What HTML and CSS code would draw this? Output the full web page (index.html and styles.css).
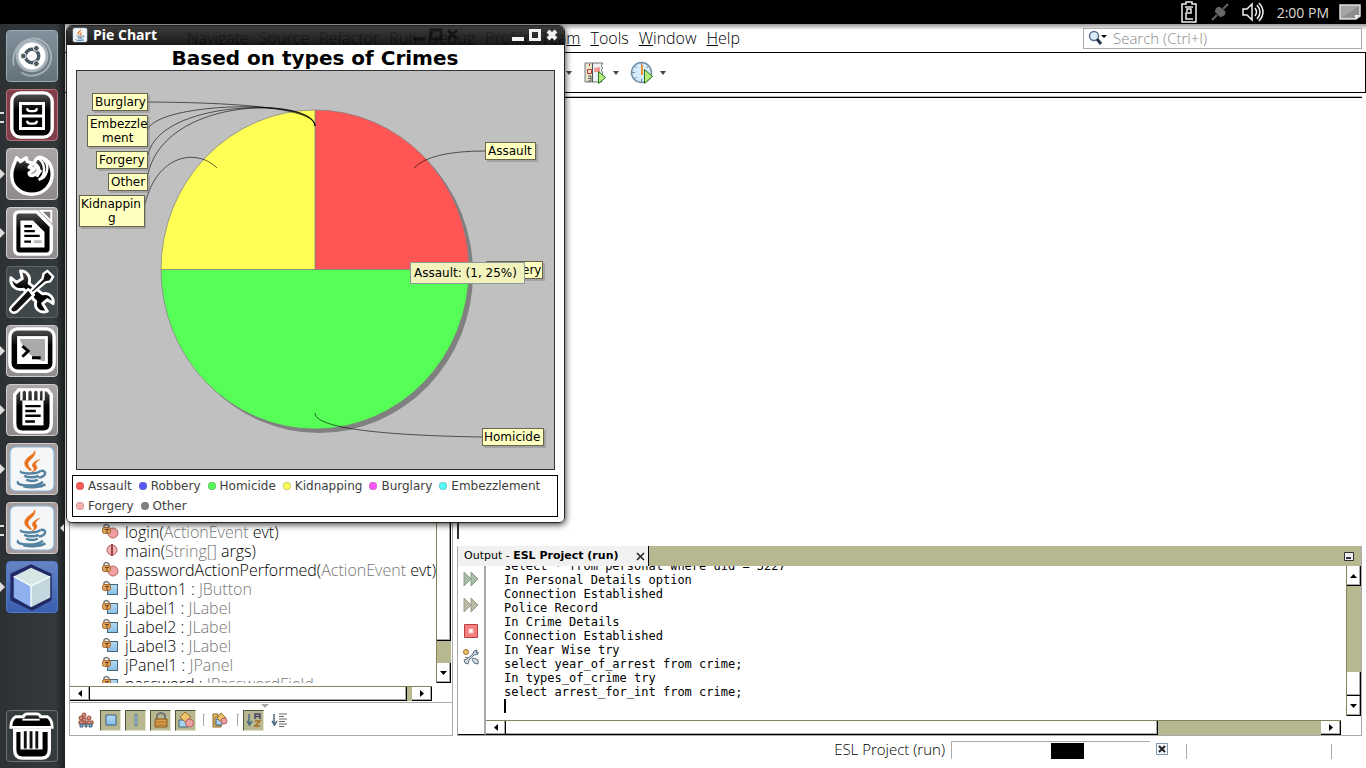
FILE: index.html
```html
<!DOCTYPE html>
<html lang="en">
<head>
<meta charset="utf-8">
<title>Pie Chart</title>
<link rel="stylesheet" href="styles.css">
</head>
<body>
<svg width="0" height="0" class="defs" aria-hidden="true">
  <defs>
    <linearGradient id="gloss" x1="0" y1="0" x2="0" y2="1"><stop offset="0" stop-color="#555"/><stop offset=".4" stop-color="#000"/></linearGradient>
    <linearGradient id="blue" x1="0" y1="0" x2="0" y2="1"><stop offset="0" stop-color="#b5daf3"/><stop offset="1" stop-color="#86bfe6"/></linearGradient>
    <symbol id="java" viewBox="0 0 52 52">
      <rect x="3" y="3" width="46" height="46" rx="6" fill="#f4f6f8" stroke="#8fb0cf" stroke-width="1.5"/>
      <path d="M29 7c2 7-9 10-7 15 1 3 4 4 3 6-5-3-9-7-5-12 3-4 8-5 9-9zM34 16c-6 2-9 5-7 8 2 2 1 4-1 5 6-2 6-5 4-7-1-2 1-4 4-6z" fill="#e9711c" stroke="#e9711c" stroke-width=".6"/>
      <path d="M15 28c-4 3 16 4 20 0M18 33c3 2 12 2 15 0M20 37c3 2 9 2 12 0M35 28c7-1 6 6-2 7M12 39c-6 5 23 6 25 0M17 44c8 2 18 1 23-2" fill="none" stroke="#5382a1" stroke-width="2.500"/>
    </symbol>
    <symbol id="lock" viewBox="0 0 17 16">
      <path d="M2 6V3q2-3 5 0v3" fill="none" stroke="#777" stroke-width="1.500"/>
      <rect x=".5" y="4.500" width="8" height="6" rx="2" fill="#dca560" stroke="#a8682a"/>
      <path d="M3 6.500h4M5 7v3" stroke="#7a3c10"/>
    </symbol>
    <symbol id="method" viewBox="0 0 17 16">
      <circle cx="11" cy="10" r="5" fill="#f0a0a0" stroke="#b86464"/><use href="#lock"/>
    </symbol>
    <symbol id="field" viewBox="0 0 17 16">
      <rect x="5.500" y="4.500" width="10" height="10" fill="url(#blue)" stroke="#4b6579"/><use href="#lock"/>
    </symbol>
  </defs>
</svg>

<header class="panel">
  <svg width="18" height="22" viewBox="0 0 18 22" fill="none" stroke="#eee" stroke-width="1.500"><path d="M6 3V1h6v2h4v18H2V3zM5 6h8M7 11V8h4v4H6v6h7"/></svg>
  <svg width="18" height="18" viewBox="0 0 18 18"><path d="M1 17l5-5M12 6l5-5" stroke="#666" stroke-width="2"/><path d="M4 9l5 5c5 0 6-4 5-6L9 4C5 4 4 6 4 9z" fill="#666"/></svg>
  <svg width="22" height="20" viewBox="0 0 22 20" fill="none" stroke="#eee" stroke-width="1.500"><path d="M1 7h4l5-5v16l-5-5H1zM13 6q3 4 0 8M15 3q6 7 0 14M17 1q8 9 0 18"/></svg>
  <time>2:00 PM</time>
  <svg width="22" height="16" viewBox="0 0 22 16"><path d="M1 1h20v11l-4 3H1z" fill="#a4a6a4" stroke="#ddd" stroke-width="1.500"/><path d="M3 13Q12 8 20 2v9h-4v3z" fill="#8b8e8b"/><path d="M16 15v-4h5" fill="#eee"/></svg>
</header>

<div class="desktop">
  <nav class="dock" aria-label="Launcher">
    <button class="tile tile-dash" aria-label="Dash"><svg viewBox="0 0 52 52"><path d="M7 36C2 10 36-4 45 21 51 41 27 53 15 43" fill="none" stroke="#b9c6cd" stroke-width="2" opacity=".7"/><circle cx="26" cy="26" r="17" fill="#a9b4bb"/><circle cx="26" cy="26" r="14" fill="#fff"/><circle cx="26" cy="26" r="7" fill="none" stroke="#4c5a63" stroke-width="3.500"/><g fill="#4c5a63" stroke="#fff"><circle cx="17" cy="26" r="3"/><circle cx="30.500" cy="18" r="3"/><circle cx="30.500" cy="34" r="3"/></g></svg></button>
    <button class="tile tile-files marked-two" aria-label="Files"><svg viewBox="0 0 52 52"><rect x="5" y="3" width="42" height="46" rx="9" fill="url(#gloss)" stroke="#fff" stroke-width="3.500"/><path d="M14 14h24v26H14zM14 27h24" fill="none" stroke="#fff" stroke-width="3"/><path d="M21 19q0 3 3 3h4q3 0 3-3M21 32q0 3 3 3h4q3 0 3-3" fill="none" stroke="#fff" stroke-width="2.500"/></svg></button>
    <button class="tile marked" aria-label="Firefox"><svg viewBox="0 0 52 52"><path d="M10 9l4 4 6-4 1 4 6 2-4 4 5 2-5 4c0 4 6 3 8 0 4-4 1-8-3-10l2-4c1-2 4-3 6-2 8 3 11 9 11 17 0 12-9 21-21 21S4 39 5 26c0-7 3-11 5-17z" fill="url(#gloss)" stroke="#fff" stroke-width="3.500" stroke-linejoin="round"/><path d="M32 9c8 5 9 18 1 23 9-2 12-15 5-21M28 18l7 5-4 6" fill="none" stroke="#fff" stroke-width="2.500"/></svg></button>
    <button class="tile marked" aria-label="Writer"><svg viewBox="0 0 52 52"><path d="M13 4h18l15 15v24q0 5-5 5H13q-5 0-5-5V9q0-5 5-5z" fill="url(#gloss)" stroke="#fff" stroke-width="3.500"/><path d="M35 3h11v11z" fill="#777" stroke="#fff" stroke-width="2"/><path d="M14 13h13l12 12v16H14z" fill="#fff"/><path d="M18 19h8M18 24h11M18 29h16M18 35h7" stroke="#000" stroke-width="2.500"/><path d="M28 35h8" stroke="#bbb" stroke-width="3"/></svg></button>
    <button class="tile tile-dark" aria-label="Settings"><svg viewBox="0 0 52 52"><g stroke-linejoin="round"><path d="M14 4c7 0 11 6 9 13l14 11c7-2 12 4 11 10l-6-4-5 4 5 8c-8 3-14-3-12-10L17 23C9 25 3 19 4 11l6 5 6-4z" fill="url(#gloss)" stroke="#fff" stroke-width="3"/><path d="M5 41l17-18 6 6-17 17q-4 3-7 0-2-2 1-5zM24 25l13-13 1-5 4-3 6 6-3 5-5 1-14 12z" fill="#111" stroke="#fff" stroke-width="2.500"/></g></svg></button>
    <button class="tile marked" aria-label="Terminal"><svg viewBox="0 0 52 52"><rect x="3" y="3" width="46" height="44" rx="8" fill="url(#gloss)" stroke="#fff" stroke-width="3.500"/><rect x="12" y="12" width="29" height="26" fill="#aaa" stroke="#fff" stroke-width="3"/><path d="M13 13v24h26C24 34 16 22 13 13z" fill="#fff"/><path d="M16 21l6 5-6 6M26 33h9" fill="none" stroke="#000" stroke-width="3"/></svg></button>
    <button class="tile marked" aria-label="Text Editor"><svg viewBox="0 0 52 52"><path d="M12 5h30l4 5v30q0 9-8 9H16q-8 0-8-9V10z" fill="url(#gloss)" stroke="#fff" stroke-width="3.500"/><path d="M16 16h22v26H16z" fill="#fff"/><path d="M15 6v10M21 6v10M27 6v10M33 6v10M38 6v10" stroke="#fff" stroke-width="2.500"/><path d="M18 6v9M24 6v9M30 6v9M36 6v9" stroke="#333" stroke-width="1.500"/><path d="M19 22h16M19 27h11M19 32h16M19 38h10" stroke="#000" stroke-width="2.500"/></svg></button>
    <button class="tile tile-java marked" aria-label="Java application"><svg><use href="#java"/></svg></button>
    <button class="tile tile-java marked-two current" aria-label="Pie Chart"><svg><use href="#java"/></svg></button>
    <button class="tile tile-cube marked" aria-label="NetBeans"><svg viewBox="0 0 52 52"><path d="M25 4l20 9v26L26 49 5 39V13z" fill="#222a66" stroke="#222a66" stroke-width="3" stroke-linejoin="round"/><path d="M25 6l20 9-20 10L7 15z" fill="#d5e6e4"/><path d="M7 15l18 10v22L7 37z" fill="#8fb0ee"/><path d="M25 25l20-10v22L25 47z" fill="#c4d7df"/><path d="M25 25v21M7 15l18 10 20-10" fill="none" stroke="#f4ffff" stroke-width="1.500"/></svg></button>
    <button class="tile tile-trash" aria-label="Trash"><svg viewBox="0 0 52 52"><path d="M8 20h36v20q0 9-8 9H16q-8 0-8-9z" fill="#000" stroke="#fff" stroke-width="3.500"/><path d="M17 6q1-3 4-3h10q3 0 4 3h7q5 3 5 11H4Q4 9 9 6z" fill="url(#gloss)" stroke="#fff" stroke-width="3"/><path d="M16 9h18" stroke="#fff" stroke-width="2"/><path d="M14 20h23v20H14z" fill="#fff"/><path d="M19 21v18M25 21v18M31 21v18" stroke="#111" stroke-width="3"/></svg></button>
  </nav>

  <main class="ide">
    <div class="menubar">
      <div class="menus">
        <a href="#">Navigate</a><a href="#">Source</a><a href="#">Refactor</a><a href="#">Run</a><a href="#">Debug</a><a href="#">Profile</a><a href="#">Tea<u>m</u></a><a href="#"><u>T</u>ools</a><a href="#"><u>W</u>indow</a><a href="#"><u>H</u>elp</a>
      </div>
      <label class="search">
        <svg width="19" height="16" viewBox="0 0 19 16"><circle cx="6" cy="6" r="4.500" fill="#d9ecf8" stroke="#58708c" stroke-width="1.500"/><path d="M9 9l4 5" stroke="#26364a" stroke-width="3"/><path d="M13 5h6l-3 3z"/></svg>
        <input type="text" placeholder="Search (Ctrl+I)" aria-label="Search">
      </label>
    </div>
    <div class="toolbar">
      <svg class="caret" viewBox="0 0 6 4"><path d="M0 0h6L3 4z"/></svg>
      <button aria-label="Debug file"><svg width="24" height="24" viewBox="0 0 24 24"><path d="M2 2h18l-2 3 2 2-2 2 2 3-2 2 2 3-2 2 1 2H2z" fill="#eee6ca" stroke="#6c7a84"/><path d="M10 3h8v17h-8z" fill="#eaf0f4"/><path d="M11 7l6-1v5h-6z" fill="#f59a94"/><path d="M4.500 8.500h4v4h-4zM6.500 3v2" fill="none" stroke="#b83830"/><path d="M5 15h3v5H5M5 17.500h3M9.500 2v19" fill="none" stroke="#555"/><path d="M15.500 10.500v12l7-6z" fill="#b5ec7a" stroke="#237321"/></svg></button>
      <svg class="caret" viewBox="0 0 6 4"><path d="M0 0h6L3 4z"/></svg>
      <button aria-label="Profile project"><svg width="24" height="24" viewBox="0 0 24 24"><circle cx="11.500" cy="11.500" r="10" fill="#d4e9fa" stroke="#7390a5" stroke-width="1.500"/><path d="M11.500 2v3M2 11.500h3M11.500 18v3M4.500 5l2 2M4.500 18l2-2M18.500 5l-2 2" stroke="#789"/><path d="M11 4h2v10h-2z" fill="#ea9235"/><path d="M14.500 8.500v14l8-7z" fill="#b5ec7a" stroke="#237321"/></svg></button>
      <svg class="caret" viewBox="0 0 6 4"><path d="M0 0h6L3 4z"/></svg>
    </div>
    <div class="workspace">
      <section class="navigator" aria-label="Navigator">
        <div class="tree-row">
          <ul class="tree">
            <li><svg><use href="#method"/></svg><span>login(<i>ActionEvent</i> evt)</span></li>
            <li><svg viewBox="0 0 17 16"><circle cx="10" cy="8" r="5" fill="#f3b0b0" stroke="#b86464"/><path d="M10 2v12" stroke="#a04848" stroke-width="2"/></svg><span>main(<i>String[]</i> args)</span></li>
            <li><svg><use href="#method"/></svg><span>passwordActionPerformed(<i>ActionEvent</i> evt)</span></li>
            <li><svg><use href="#field"/></svg><span>jButton1 : <i>JButton</i></span></li>
            <li><svg><use href="#field"/></svg><span>jLabel1 : <i>JLabel</i></span></li>
            <li><svg><use href="#field"/></svg><span>jLabel2 : <i>JLabel</i></span></li>
            <li><svg><use href="#field"/></svg><span>jLabel3 : <i>JLabel</i></span></li>
            <li><svg><use href="#field"/></svg><span>jPanel1 : <i>JPanel</i></span></li>
            <li class="cut"><svg><use href="#field"/></svg><span>password : <i>JPasswordField</i></span></li>
          </ul>
          <div class="vscroll tree-scroll"><div class="thumb grow"></div><div class="track"></div><button aria-label="Scroll down"><svg viewBox="0 0 8 8"><path d="M0 2h7L3.500 6z"/></svg></button></div>
        </div>
        <div class="hscroll tree-hscroll"><button aria-label="Scroll left"><svg viewBox="0 0 8 8"><path d="M6 0v7L2 3.500z"/></svg></button><div class="thumb grow"></div><div class="track"></div><button aria-label="Scroll right"><svg viewBox="0 0 8 8"><path d="M2 0v7l4-3.500z"/></svg></button></div>
        <div class="filters">
          <svg class="grip" viewBox="0 0 8 4"><path d="M0 0h8L4 4z"/></svg>
          <button aria-label="Show inherited members"><svg viewBox="0 0 16 16"><g fill="#e08d80" stroke="#8e4a36"><circle cx="6" cy="3" r="2"/><path d="M4 6h4v6H4z"/><circle cx="11" cy="6" r="2"/><path d="M9 9h6v3H9z"/><circle cx="3" cy="6" r="2"/><path d="M1 9h5v3H1z"/></g><path d="M2 12h3v3H2zM7 12h2v3H7zM11 12h3v3h-3z" fill="#7fb0d4" stroke="#44617a"/></svg></button>
          <button class="on" aria-label="Show fields" aria-pressed="true"><svg viewBox="0 0 16 16"><path d="M3 3h10v10H3z" fill="url(#blue)" stroke="#3c6082"/></svg></button>
          <button class="on" aria-label="Show static members" aria-pressed="true"><svg viewBox="0 0 16 16"><path d="M7 2h2v12H7z" fill="#b4dcf2" stroke="#5b7586"/></svg></button>
          <button class="on" aria-label="Show non-public members" aria-pressed="true"><svg viewBox="0 0 16 16"><path d="M4 7V3q4-4 8 0v4" fill="none" stroke="#777" stroke-width="2"/><path d="M2 7h12v8H2z" fill="#db9d49" stroke="#85561d"/><path d="M2 10h12M2 13h12" stroke="#a77231"/></svg></button>
          <button class="on" aria-label="Show inner classes" aria-pressed="true"><svg viewBox="0 0 16 16"><path d="M1 8h9v7H1z" fill="#a6d3ef" stroke="#46657c"/><path d="M7 0l6 5-6 5-5-5z" fill="#f0c36e" stroke="#966c2f"/><circle cx="11.500" cy="11" r="4" fill="#f1a0a0" stroke="#b36362"/></svg></button>
          <span class="sep"></span>
          <button aria-label="Fully qualified names"><svg viewBox="0 0 16 16"><path d="M1 2h5v3H3v8h6v2H1z" fill="#f2c667" stroke="#84622a"/><path d="M4 7h6v6H4z" fill="#a6d3ef" stroke="#46657c"/><path d="M9 1l5 5-5 4-4-4z" fill="#f0c36e" stroke="#966c2f"/><circle cx="12" cy="9" r="3" fill="#f1a0a0" stroke="#b36362"/></svg></button>
          <span class="sep"></span>
          <button class="on" aria-label="Sort by name" aria-pressed="true"><svg viewBox="0 0 16 16"><path d="M3 2v11M1 9l2.500 4L6 9" fill="none" stroke="#4d6b84" stroke-width="1.500"/><path d="M9 7V2h5v5M9 4.500h5" fill="none" stroke="#446" stroke-width="1.500"/><path d="M9 9h5l-5 5h5" fill="none" stroke="#a86b20" stroke-width="1.500"/></svg></button>
          <button aria-label="Sort by source"><svg viewBox="0 0 16 16"><path d="M3 2v11M1 9l2.500 4L6 9" fill="none" stroke="#4d6b84" stroke-width="1.500"/><path d="M8 2h8M8 4.500h5M8 7h8M8 9.500h6M8 12h8M8 14.500h5" stroke="#666"/></svg></button>
        </div>
      </section>
      <div class="right">
        <section class="editor" aria-label="Editor"></section>
        <section class="output">
          <div class="tabs">
            <div class="tab"><span>Output - <b>ESL Project (run)</b></span><button aria-label="Close tab"><svg width="9" height="9" viewBox="0 0 9 9"><path d="M1 1l7 7M8 1L1 8" stroke="#222" stroke-width="1.500"/></svg></button></div>
            <button class="minimize" aria-label="Minimize"><svg width="10" height="9" viewBox="0 0 10 9"><path d="M.5.500h9v8h-9z" fill="#eee" stroke="#333"/><path d="M2 5h5v2H2z" fill="#334"/></svg></button>
          </div>
          <div class="output-body">
            <div class="output-tools">
              <button aria-label="Rerun"><svg viewBox="0 0 16 16"><path d="M1 1v14l7-7zM8 1v14l7-7z" fill="#a8bda6" stroke="#8aa08a"/></svg></button>
              <button aria-label="Rerun with changes"><svg viewBox="0 0 16 16"><path d="M1 1v14l7-7zM8 1v14l7-7z" fill="#babaa6" stroke="#9c9c8a"/></svg></button>
              <button aria-label="Stop"><svg viewBox="0 0 16 16"><path d="M1.500 1.500h13v13h-13z" fill="#f58080" stroke="#b84040"/><path d="M6 6h4v4H6z" fill="#fff" stroke="#fbc4c4"/></svg></button>
              <button aria-label="Output settings"><svg viewBox="0 0 16 16"><circle cx="3" cy="3" r="2.500" fill="#f0c26a" stroke="#9b7127"/><path d="M14 1l-3 1-1 3-6 5-3 1 1 3 3 1 1-4 5-5 4-1V3l-2 1zM2 8l3 1M9 10l2-1 4 2v4l-4-1z" fill="#d5dfe8" stroke="#5c6d7e"/></svg></button>
            </div>
            <div class="console-col">
              <div class="console-row">
                <ul class="console">
                  <li class="cut">select * from personal where uid = 3227</li>
                  <li>In Personal Details option</li>
                  <li>Connection Established</li>
                  <li>Police Record</li>
                  <li>In Crime Details</li>
                  <li>Connection Established</li>
                  <li>In Year Wise try</li>
                  <li>select year_of_arrest from crime;</li>
                  <li>In types_of_crime try</li>
                  <li>select arrest_for_int from crime;</li>
                  <li class="cursor"></li>
                </ul>
                <div class="vscroll"><button aria-label="Scroll up"><svg viewBox="0 0 8 8"><path d="M0 6h7L3.500 2z"/></svg></button><div class="track grow"></div><div class="thumb"></div><button aria-label="Scroll down"><svg viewBox="0 0 8 8"><path d="M0 2h7L3.500 6z"/></svg></button></div>
              </div>
              <div class="hscroll"><button aria-label="Scroll left"><svg viewBox="0 0 8 8"><path d="M6 0v7L2 3.500z"/></svg></button><div class="thumb"></div><div class="track"></div><button aria-label="Scroll right"><svg viewBox="0 0 8 8"><path d="M2 0v7l4-3.500z"/></svg></button></div>
            </div>
          </div>
        </section>
      </div>
    </div>
    <footer class="status">
      <span>ESL Project (run)</span>
      <div class="progress" role="progressbar" aria-label="ESL Project (run)"><div class="block"></div></div>
      <button aria-label="Cancel"><svg width="12" height="12" viewBox="0 0 12 12"><path d="M.5.500h11v11H.5z" fill="#f2f6fa" stroke="#7e98b4"/><path d="M3 3l6 6M9 3l-6 6" stroke="#222" stroke-width="2"/></svg></button>
      <div class="cell"></div>
      <div class="cell-end"></div>
    </footer>
  </main>
</div>

<section class="window" aria-label="Pie Chart">
  <div class="titlebar">
    <svg width="16" height="16"><use href="#java"/></svg>
    <h1>Pie Chart</h1>
    <svg class="ghost" width="46" height="14" viewBox="0 0 46 14"><path d="M0 11h12M18 2h10v9H18zM35 2l9 9M44 2l-9 9" fill="none" stroke="#000" stroke-width="3"/></svg>
    <button aria-label="Minimize"><svg width="12" height="12" viewBox="0 0 12 12"><path d="M0 8h12v4H0z" fill="#f2f2f2"/></svg></button>
    <button aria-label="Maximize"><svg width="12" height="12" viewBox="0 0 12 12"><path d="M1.500 1.500h9v9h-9z" fill="none" stroke="#f2f2f2" stroke-width="3"/></svg></button>
    <button aria-label="Close"><svg width="12" height="12" viewBox="0 0 12 12"><path d="M2 2l8 8M10 2l-8 8" stroke="#f2f2f2" stroke-width="4"/></svg></button>
  </div>
  <div class="chart">
    <h2>Based on types of Crimes</h2>
    <svg class="plot" viewBox="76 70 479 400" role="img" aria-label="Pie chart of crime types">
      <rect x="76.500" y="70.500" width="478" height="399" fill="#c0c0c0" stroke="#333"/>
      <ellipse cx="319" cy="273.500" rx="154" ry="159.500" fill="#808080"/>
      <g stroke="#808080" stroke-width=".7">
        <path d="M315 269.500V110A154 159.500 0 0 1 469 269.500z" fill="#f55"/>
        <path d="M315 269.500H469A154 159.500 0 0 1 161 269.500z" fill="#5f5"/>
        <path d="M315 269.500H161A154 159.500 0 0 1 315 110z" fill="#ff5"/>
      </g>
      <g fill="none" stroke="#000" stroke-opacity=".6">
        <path d="M148 102Q315 103 315 126"/>
        <path d="M148 129C160 102 315 98 315 126"/>
        <path d="M148 155C160 98 315 98 315 126"/>
        <path d="M148 174C166 94 315 98 315 126"/>
        <path d="M145 204C157 154 197 148 217 168"/>
        <path d="M414 168Q430 151 485 151"/>
        <path d="M315 413C315 432 420 436 482 437"/>
      </g>
      <g class="shade">
        <path d="M94 95h56v18H94zM89 117h61v32H89zM98 153h52v18H98zM110 175h40v18h-40zM81 197h65v32H81zM487 144h51v18h-51zM488 263h57v18h-57zM484 430h62v18h-62z"/>
      </g>
      <g class="tags">
        <rect x="92.500" y="93.500" width="55" height="17"/><rect x="87.500" y="115.500" width="60" height="31"/><rect x="96.500" y="151.500" width="51" height="17"/><rect x="108.500" y="173.500" width="39" height="17"/><rect x="79.500" y="195.500" width="65" height="31"/><rect x="485.500" y="142.500" width="50" height="17"/><rect x="486.500" y="261.500" width="56" height="17"/><rect x="482.500" y="428.500" width="61" height="17"/>
      </g>
      <g class="tag-text">
        <text x="95" y="106">Burglary</text><text x="90" y="128">Embezzle</text><text x="102" y="142">ment</text><text x="99" y="164">Forgery</text><text x="111" y="186">Other</text><text x="81" y="208">Kidnappin</text><text x="108" y="222">g</text><text x="488" y="155">Assault</text><text x="522" y="274">ery</text><text x="484" y="441">Homicide</text>
      </g>
    </svg>
    <ul class="legend">
      <li class="c-assault">Assault</li><li class="c-robbery">Robbery</li><li class="c-homicide">Homicide</li><li class="c-kidnapping">Kidnapping</li><li class="c-burglary">Burglary</li><li class="c-embezzlement">Embezzlement</li><li class="c-forgery">Forgery</li><li class="c-other">Other</li>
    </ul>
  </div>
  <div class="tooltip" role="tooltip">Assault: (1, 25%)</div>
</section>
</body>
</html>
```
FILE: styles.css
```css
* { box-sizing: border-box; }
body { margin: 0; height: 100vh; display: flex; flex-direction: column; overflow: hidden; background: #fff; color: #000; font: 300 15px/19px "Open Sans", "Noto Sans", sans-serif; }
ul { list-style: none; margin: 0; padding: 0; }
h1, h2 { margin: 0; }
button { border: 0; padding: 0; margin: 0; background: none; display: flex; align-items: center; justify-content: center; flex: none; }
svg { display: block; flex: none; }
i { font-style: normal; color: #777; }
.defs { position: absolute; }
.grow { flex: 1; }

.panel { height: 24px; flex: none; background: #000; color: #dfdbd2; display: flex; align-items: center; justify-content: flex-end; gap: 13px; padding-right: 5px; font-size: 14px; font-weight: 400; }
.panel time { margin-right: -3px; }
.desktop { flex: 1; min-height: 0; display: flex; }

.dock { width: 65px; flex: none; display: flex; flex-direction: column; gap: 7px; padding: 6px 0 6px 6px; background: linear-gradient(90deg, #2d3133, #343a3c 85%, #1d2020); }
.tile { position: relative; width: 52px; height: 52px; border-radius: 4px; border: 1px solid #d0cccd; background: linear-gradient(#aaa5a7, #8f8b8d); }
.tile svg { width: 50px; height: 50px; }
.tile-dash { background: linear-gradient(#82919b, #64727b); border-color: #9caab2; }
.tile-files { background: #80404a; border-color: #b5727c; }
.tile-dark { background: #40474a; border-color: #5d6568; }
.tile-java { background: #a59b98; }
.tile-cube { background: linear-gradient(#6684c4, #3a5fae); border-color: #4f79cc; }
.tile-trash { background: #363c3e; border-color: #6b7072; margin-top: auto; }
.marked::before { content: ""; position: absolute; left: -7px; top: 20px; border: 5px solid transparent; border-left-color: #ddd; border-right-width: 0; }
.marked-two::before { content: ""; position: absolute; left: -7px; top: 22px; width: 4px; height: 7px; border: solid #ddd; border-width: 2px 0; }
.current::after { content: ""; position: absolute; right: -7px; top: 21px; border: 4px solid transparent; border-right-color: #ddd; border-left-width: 0; }

.ide { flex: 1; min-width: 0; display: flex; flex-direction: column; }
.menubar { height: 29px; flex: none; display: flex; justify-content: space-between; align-items: center; padding: 0 4px 0 0; border-bottom: 1px solid #000; background: linear-gradient(#999, #fff 6px); }
.menus { width: 675px; display: flex; justify-content: flex-end; gap: 10px; font-size: 16px; }
.menus a { color: #000; text-decoration: none; }
.search { width: 279px; height: 21px; display: flex; align-items: center; border: 1px solid #aaa; padding-left: 4px; background: #fff; }
.search input { flex: 1; min-width: 0; border: 0; outline: 0; padding: 0 0 0 6px; font: inherit; background: none; }
.search input::placeholder { color: #888; opacity: 1; }
.toolbar { height: 40px; flex: none; display: flex; align-items: center; gap: 6px; padding-left: 501px; border: solid #000; border-width: 0 1px 1px 0; }
.toolbar button { width: 29px; height: 24px; justify-content: flex-end; }
.toolbar .caret { width: 6px; height: 4px; fill: #444; }
.workspace { flex: 1; min-height: 0; display: flex; gap: 4px; margin: 4px 4px 0; }

.navigator { width: 384px; flex: none; display: flex; flex-direction: column; border: solid #aaa; border-width: 0 1px 1px; }
.tree-row { flex: 1; min-height: 0; display: flex; }
.tree { flex: 1; min-width: 0; display: flex; flex-direction: column; justify-content: flex-end; overflow: hidden; padding-left: 32px; font-size: 16px; }
.tree li { height: 19px; flex: none; display: flex; gap: 6px; white-space: nowrap; }
.tree li svg { width: 17px; height: 16px; }
.tree .cut { height: 8px; overflow: hidden; }
.vscroll { width: 15px; flex: none; display: flex; flex-direction: column; border-left: 1px solid #84845c; background: #b8b890; }
.vscroll button, .vscroll .thumb { background: #fff; border: solid #000; border-width: 0 1px 1px 0; box-shadow: inset -1px -1px #aaa; }
.vscroll button { height: 20px; }
.vscroll .thumb { height: 24px; }
.vscroll svg, .hscroll svg { width: 8px; height: 8px; }
.tree-scroll { margin-right: 1px; }
.tree-scroll .track { height: 22px; }
.tree-scroll .grow { height: auto; }
.hscroll { height: 15px; flex: none; display: flex; border-top: 1px solid #84845c; background: #b8b890; }
.hscroll button, .hscroll .thumb { background: #fff; border: solid #000; border-width: 0 1px 1px 0; box-shadow: inset -1px -1px #aaa; }
.hscroll button { width: 20px; }
.tree-hscroll { margin: 3px 20px 1px 0; }
.tree-hscroll .track { width: 5px; }
.filters { position: relative; height: 33px; flex: none; display: flex; align-items: center; gap: 4px; padding: 2px 0 0 5px; border-top: 1px solid #aaa; }
.filters button { width: 21px; height: 21px; }
.filters button svg { width: 16px; height: 16px; }
.filters .on { background: #b8b890; border: 1px solid; border-color: #55553c #e4e4c8 #e4e4c8 #55553c; }
.filters .sep { width: 2px; height: 12px; border: solid #aaa; border-width: 1px 0 0 1px; margin-left: 3px; }
.grip { position: absolute; left: 50%; top: 1px; width: 8px; height: 4px; fill: #aaa; }

.right { flex: 1; min-width: 0; display: flex; flex-direction: column; gap: 7px; }
.editor { flex: 1; border: solid #000; border-width: 1px 0 0 2px; border-left-color: #333; box-shadow: 0 -1px #bbb; }
.output { height: 190px; flex: none; display: flex; flex-direction: column; border: 1px solid #aaa; border-top: 0; }
.tabs { height: 20px; flex: none; display: flex; justify-content: space-between; align-items: center; background: #b8b890; padding-right: 7px; }
.tab { height: 20px; width: 191px; display: flex; align-items: center; justify-content: space-between; padding: 0 3px 0 6px; background: #f1f1f1; border-right: 1px solid #000; font: 11px/20px "DejaVu Sans", sans-serif; white-space: nowrap; }
.output-body { flex: 1; min-height: 0; display: flex; }
.output-tools { width: 28px; flex: none; display: flex; flex-direction: column; align-items: center; gap: 10px; padding-top: 5px; border-right: 2px solid #aaa; border-bottom: 1px solid #000; }
.output-tools svg { width: 16px; height: 16px; }
.console-col { flex: 1; min-width: 0; display: flex; flex-direction: column; }
.console-row { flex: 1; min-height: 0; display: flex; margin-bottom: 4px; }
.console { flex: 1; min-width: 0; padding-left: 18px; overflow: hidden; font: 12px/14px "DejaVu Sans Mono", monospace; }
.console li { height: 14px; white-space: pre; }
.console .cut { height: 7px; display: flex; align-items: flex-end; overflow: hidden; }
.console .cursor { width: 2px; background: #000; }
.console-col .hscroll { margin-right: 20px; }
.console-col .hscroll .thumb { flex: 652; }
.console-col .hscroll .track { flex: 163; }

.status { height: 32px; flex: none; display: flex; align-items: flex-start; justify-content: flex-end; padding: 4px 30px 0 0; }
.progress { width: 199px; height: 18px; margin: 1px 6px 0; border: solid #aaa; border-width: 1px 0 0 1px; display: flex; justify-content: center; padding: 1px 0 0 32px; }
.block { width: 33px; height: 16px; background: #000; }
.status button { margin: 3px 18px 0 0; }
.cell { width: 145px; }
.cell, .cell-end { height: 15px; margin-top: 4px; border-left: 1px solid #aaa; }
.cell-end { width: 5px; }

.window { position: absolute; left: 66px; top: 25px; width: 499px; border: 1px solid #222; border-radius: 6px; box-shadow: 1px 2px 6px rgba(0, 0, 0, .7); color: #000; }
.titlebar { height: 19px; display: flex; align-items: center; gap: 5px; padding: 0 6px 2px 5px; border-radius: 5px 5px 0 0; background: linear-gradient(rgba(50, 50, 50, .95), rgba(0, 0, 0, .9)); }
.titlebar h1 { flex: 1; font: 700 14px/17px "Open Sans", sans-serif; color: #fff; }
.ghost { margin-right: 48px; opacity: .5; }
.chart { background: #fff; border-radius: 0 0 5px 5px; padding: 0 6px 5px 5px; }
.chart h2 { height: 25px; font: 700 20px/27px "DejaVu Sans", sans-serif; text-align: center; }
.plot { width: 479px; height: 400px; margin: 0 3px 5px 4px; }
.shade { fill: #808080; opacity: .45; }
.tags { fill: #ffffc0; stroke: #66664d; }
.tag-text { font: 12px "DejaVu Sans", sans-serif; }
.legend { display: flex; flex-wrap: wrap; column-gap: 7px; padding: 0 3px; border: 1px solid #000; font: 12px/20px "DejaVu Sans", sans-serif; color: #404040; }
.legend li { display: flex; align-items: center; gap: 4px; }
.legend li::before { content: ""; width: 8px; height: 8px; border-radius: 50%; background: var(--dot); box-shadow: inset 0 0 0 1px rgba(128, 128, 128, .4); }
.c-assault { --dot: #f55; }
.c-robbery { --dot: #55f; }
.c-homicide { --dot: #5f5; }
.c-kidnapping { --dot: #ff5; }
.c-burglary { --dot: #f5f; }
.c-embezzlement { --dot: #5ff; }
.c-forgery { --dot: #ffafaf; }
.c-other { --dot: #808080; }
.tooltip { position: absolute; left: 343px; top: 236px; padding: 0 7px 0 3px; border: 1px solid #8c9c9c; background: #f2f2bd; font: 12px/20px "DejaVu Sans", sans-serif; white-space: nowrap; }
```
